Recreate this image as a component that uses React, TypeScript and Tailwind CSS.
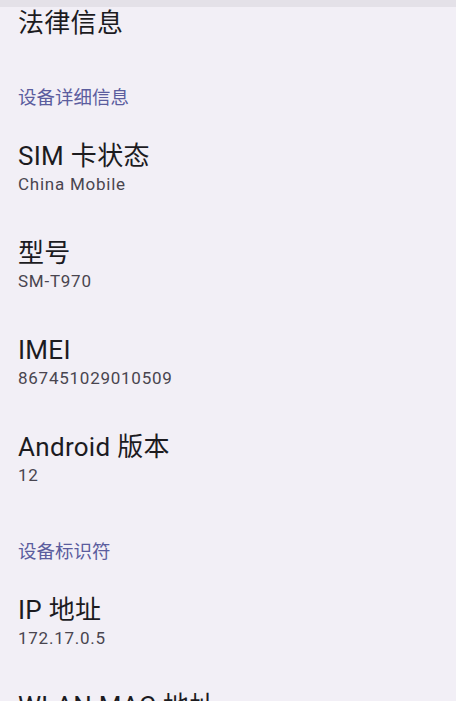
const FONT = "font-['Roboto','Noto_Sans_CJK_SC',sans-serif]";

type Pref = { title: string; summary?: string };

const details: Pref[] = [
  { title: "SIM 卡状态", summary: "China Mobile" },
  { title: "型号", summary: "SM-T970" },
  { title: "IMEI", summary: "867451029010509" },
  { title: "Android 版本", summary: "12" },
];

const identifiers: Pref[] = [
  { title: "IP 地址", summary: "172.17.0.5" },
  { title: "WLAN MAC 地址", summary: "02:00:00:44:55:66" },
];

function PrefItem({ item }: { item: Pref }) {
  return (
    <div className="px-[18px]">
      <div className="text-[26px] leading-[32px] tracking-[0.3px] text-[#1c1b1f]">{item.title}</div>
      {item.summary ? (
        <div className="mt-[2px] text-[17px] leading-[20px] tracking-[0.75px] text-[#49454f]">
          {item.summary}
        </div>
      ) : null}
    </div>
  );
}

function Header({ label }: { label: string }) {
  return (
    <div className="px-[18px] text-[18.5px] leading-[24px] text-[#5b5d9e]">{label}</div>
  );
}

export default function App() {
  return (
    <main className={`h-[701px] w-[456px] overflow-hidden bg-[#f2eff6] ${FONT}`}>
      <div className="h-[7px] bg-[#e4e1e8]" />
      <PrefItem item={{ title: "法律信息" }} />

      <div className="mt-[47px]">
        <Header label="设备详细信息" />
      </div>
      <div className="mt-[30px] flex flex-col gap-[43px]">
        {details.map((item) => (
          <PrefItem key={item.title} item={item} />
        ))}
      </div>

      <div className="mt-[55px]">
        <Header label="设备标识符" />
      </div>
      <div className="mt-[30px] flex flex-col gap-[42px]">
        {identifiers.map((item) => (
          <PrefItem key={item.title} item={item} />
        ))}
      </div>
    </main>
  );
}
